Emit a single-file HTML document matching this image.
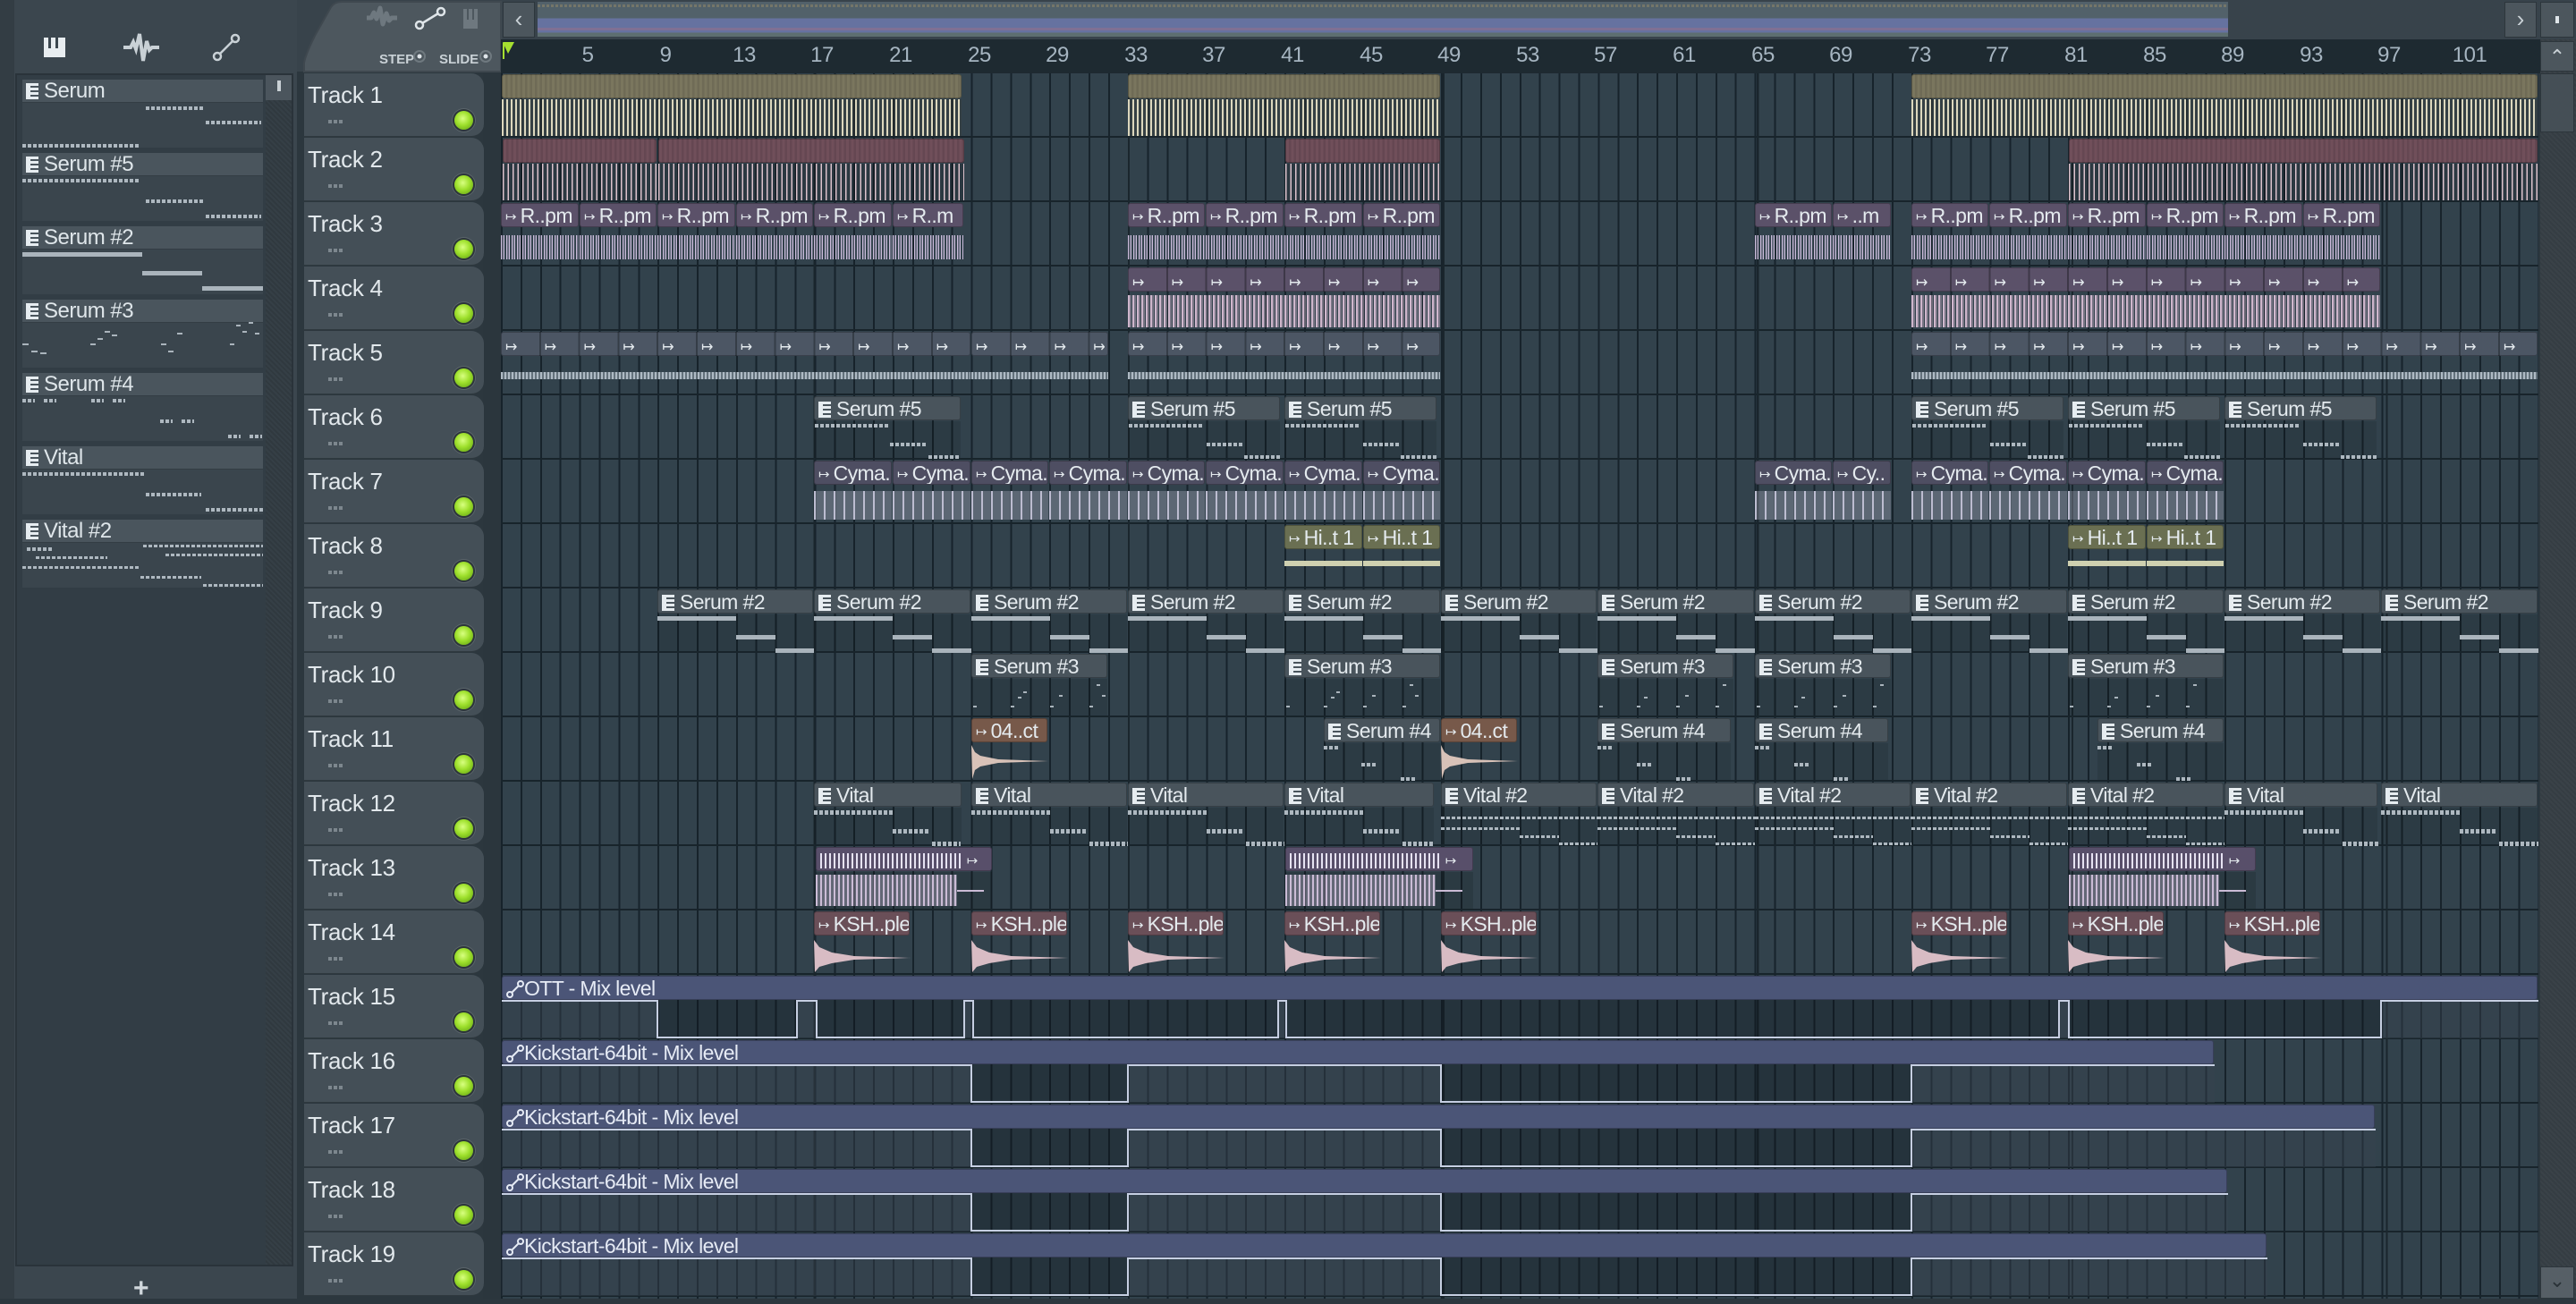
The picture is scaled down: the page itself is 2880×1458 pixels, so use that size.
<!DOCTYPE html>
<html><head><meta charset="utf-8">
<style>
*{margin:0;padding:0;box-sizing:border-box}
body{width:2880px;height:1452px;overflow:hidden;background:#2c373e;font-family:"Liberation Sans Narrow","Liberation Sans",sans-serif;color:#dfe6ea;position:relative}
.a{position:absolute}
#top{left:0;top:0;width:2880px;height:80px;background:#38434b}
#ruler{left:560px;top:44px;width:2280px;height:38px;background:#1e2a31}
#ruler span{position:absolute;top:4px;width:40px;text-align:center;font-size:24px;color:#a6b5c1;letter-spacing:-0.5px}
#grid{left:560px;top:82px;width:2278px;height:1370px;background-color:#32424c;
background-image:repeating-linear-gradient(180deg,transparent 0 70px,#18242b 70px 72px),repeating-linear-gradient(90deg,#17232b 0 2px,transparent 2px 21.9px)}
.th{position:absolute;left:340px;width:201px;height:71px;background:#444f57;border-radius:0 14px 14px 0;border-bottom:1px solid #2f393f}
.th b{position:absolute;left:4px;top:9px;font-weight:normal;font-size:26px;letter-spacing:-0.3px;color:#e2e8ec}
.th i{position:absolute;left:27px;top:52px;width:16px;height:4px;background:repeating-linear-gradient(90deg,#7d878e 0 4px,transparent 4px 6px)}
.th u{position:absolute;left:168px;top:42px;width:21px;height:21px;border-radius:50%;background:radial-gradient(circle at 45% 40%,#d8ff80 0,#9ee02c 45%,#5a9a10 100%);box-shadow:0 0 0 2px #2c353a,0 0 0 3px #5a646a}
.c{position:absolute;height:71px}
.h{position:absolute;left:0;right:1px;top:1px;height:27px;border-radius:3px;font-size:23px;letter-spacing:-0.6px;line-height:27px;padding-left:4px;white-space:nowrap;overflow:hidden;color:#e4eaee;border:1px solid rgba(0,0,0,.25)}
.h s{text-decoration:none;font-size:15px;margin-right:4px;vertical-align:2px;letter-spacing:0}
.bd{position:absolute;left:0;right:1px;top:29px;bottom:1px}
.pt .h{background:#49545c}
.pt .bd{background:rgba(0,0,0,.1)}
.ic{display:inline-block;width:14px;height:18px;vertical-align:-2px;margin-right:6px;background:repeating-linear-gradient(180deg,#e6ecf0 0 3px,#49545c 3px 5px);border-left:5px solid #e6ecf0}
.n{position:absolute;height:4px;background:repeating-linear-gradient(90deg,#aeb8c0 0 4px,transparent 4px 6px)}
.ns{position:absolute;height:5px;background:#aab4bc}
.w1{background:repeating-linear-gradient(90deg,#dcd7bd 0 2px,rgba(60,60,50,.3) 2px 5px)}
.w2{background:repeating-linear-gradient(90deg,#dcc2cc 0 1.5px,rgba(0,0,0,.15) 1.5px 5.5px)}
.wv{position:absolute;left:0;right:0}
.w3{top:8px;bottom:6px;background:repeating-linear-gradient(90deg,#cbbcdb 0 1px,rgba(200,185,220,.35) 1px 3px,#cbbcdb 3px 4px,transparent 4px 6px)}
.w4{top:3px;bottom:2px;background:repeating-linear-gradient(90deg,#cfb6cc 0 2px,rgba(207,182,204,.45) 2px 4px,transparent 4px 5px)}
.w5{top:17px;height:8px;background:repeating-linear-gradient(90deg,#aebac4 0 2px,rgba(174,186,196,.4) 2px 4px)}
.w7{top:6px;bottom:3px;background:repeating-linear-gradient(90deg,#bcbcd0 0 2px,rgba(188,188,208,.3) 2px 11px)}
.mk{display:inline-block;width:43.8px;font-style:normal;font-size:16px;letter-spacing:0}
.ha{background:#4b5577;color:#e6ebf5}
.ab{position:absolute;left:0;right:0;top:28px;height:43px}
.lp{position:absolute;left:25px;width:269px;height:26px;background:#4a555d;font-size:24px;letter-spacing:-0.5px;line-height:26px;padding-left:4px;border-bottom:1px solid #333d44}
.lb{position:absolute;left:25px;width:269px;height:50px;background:#3a454d}
</style></head><body>
<div class="a" id="top"></div>
<!-- left panel -->
<div class="a" style="left:0;top:0;width:16px;height:1452px;background:#333d44"></div>
<div class="a" style="left:16px;top:0;width:316px;height:1452px;background:#3b464e"></div>
<div class="a" style="left:17px;top:82px;width:311px;height:1334px;background:#323d45;border:2px solid #2a333a"></div>
<div class="a" style="left:297px;top:84px;width:29px;height:1330px;background:repeating-linear-gradient(45deg,#353f46 0 2px,#30393f 2px 4px)"></div>
<div class="a" style="left:297px;top:84px;width:29px;height:28px;background:#4b555d"></div>
<div class="a" style="left:310px;top:90px;width:4px;height:12px;background:#c9d0d5"></div>
<div class="a" style="left:49px;top:42px;width:24px;height:22px;background:#e8edf0"></div>
<div class="a" style="left:54px;top:42px;width:3px;height:12px;background:#3b464e"></div>
<div class="a" style="left:62px;top:42px;width:3px;height:12px;background:#3b464e"></div>
<svg class="a" style="left:136px;top:36px" width="44" height="34"><path d="M2 17h8l3-6 3 8 4-17 4 30 4-22 3 10 3-3h8" stroke="#c9d1d6" stroke-width="4" fill="none"/></svg>
<svg class="a" style="left:236px;top:36px" width="34" height="34"><circle cx="7" cy="27" r="4" stroke="#c9d1d6" stroke-width="2.5" fill="none"/><circle cx="27" cy="7" r="4" stroke="#c9d1d6" stroke-width="2.5" fill="none"/><path d="M10 24L24 10" stroke="#c9d1d6" stroke-width="2.5"/></svg>
<div class="lp" style="top:89px"><span class="ic"></span>Serum</div><div class="lb" style="top:115px"><div class="n" style="left:138px;top:4px;width:64px"></div><div class="n" style="left:205px;top:20px;width:62px"></div><div class="n" style="left:0;top:46px;width:132px"></div></div>
<div class="lp" style="top:171px"><span class="ic"></span>Serum #5</div><div class="lb" style="top:197px"><div class="n" style="left:0;top:3px;width:132px"></div><div class="n" style="left:138px;top:26px;width:64px"></div><div class="n" style="left:205px;top:43px;width:62px"></div></div>
<div class="lp" style="top:253px"><span class="ic"></span>Serum #2</div><div class="lb" style="top:279px"><div class="ns" style="left:0;top:3px;width:134px"></div><div class="ns" style="left:134px;top:24px;width:67px"></div><div class="ns" style="left:201px;top:41px;width:68px"></div></div>
<div class="lp" style="top:335px"><span class="ic"></span>Serum #3</div><div class="lb" style="top:361px"><div class="ns" style="left:0;top:23px;width:7px;height:2px"></div><div class="ns" style="left:10px;top:31px;width:7px;height:2px"></div><div class="ns" style="left:20px;top:33px;width:7px;height:2px"></div><div class="ns" style="left:76px;top:23px;width:6px;height:2px"></div><div class="ns" style="left:84px;top:17px;width:6px;height:2px"></div><div class="ns" style="left:92px;top:9px;width:6px;height:2px"></div><div class="ns" style="left:100px;top:13px;width:6px;height:2px"></div><div class="ns" style="left:155px;top:23px;width:6px;height:2px"></div><div class="ns" style="left:163px;top:31px;width:6px;height:2px"></div><div class="ns" style="left:173px;top:11px;width:6px;height:2px"></div><div class="ns" style="left:232px;top:23px;width:5px;height:2px"></div><div class="ns" style="left:239px;top:2px;width:5px;height:2px"></div><div class="ns" style="left:246px;top:9px;width:5px;height:2px"></div><div class="ns" style="left:253px;top:-1px;width:5px;height:2px"></div><div class="ns" style="left:260px;top:11px;width:5px;height:2px"></div></div>
<div class="lp" style="top:417px"><span class="ic"></span>Serum #4</div><div class="lb" style="top:443px"><div class="n" style="left:0;top:3px;width:14px"></div><div class="n" style="left:24px;top:3px;width:14px"></div><div class="n" style="left:77px;top:3px;width:14px"></div><div class="n" style="left:101px;top:3px;width:14px"></div><div class="n" style="left:154px;top:26px;width:14px"></div><div class="n" style="left:178px;top:26px;width:14px"></div><div class="n" style="left:230px;top:43px;width:14px"></div><div class="n" style="left:254px;top:43px;width:14px"></div></div>
<div class="lp" style="top:499px"><span class="ic"></span>Vital</div><div class="lb" style="top:525px"><div class="n" style="left:0;top:3px;width:136px"></div><div class="n" style="left:138px;top:26px;width:62px"></div><div class="n" style="left:205px;top:43px;width:64px"></div></div>
<div class="lp" style="top:581px"><span class="ic"></span>Vital #2</div><div class="lb" style="top:607px"><div class="n" style="left:5px;top:5px;width:30px"></div><div class="n" style="left:15px;top:15px;width:80px;height:3px"></div><div class="n" style="left:0;top:26px;width:130px;height:3px"></div><div class="n" style="left:135px;top:2px;width:134px;height:3px"></div><div class="n" style="left:160px;top:12px;width:109px;height:3px"></div><div class="n" style="left:132px;top:37px;width:68px;height:3px"></div><div class="n" style="left:202px;top:46px;width:67px;height:3px"></div></div>
<div class="a" style="left:16px;top:1417px;width:316px;height:35px;background:#3b464e"></div>
<div class="a" style="left:149px;top:1424px;font-size:30px;font-weight:bold;color:#d0d7dc">+</div>
<!-- tab -->
<svg class="a" style="left:338px;top:0" width="224" height="82"><path d="M2 80L2 70Q4 60 14 40L32 8Q36 2 44 2H222V80Z" fill="#4d575e" stroke="#3f484f" stroke-width="2"/>
<path d="M72 20h5l3-6 3 7 4-12 3 18 4-12 3 8 3-3h6" stroke="#6e787f" stroke-width="5" fill="none" stroke-linejoin="round"/>
<circle cx="131" cy="28" r="4" stroke="#dfe5e9" stroke-width="2.5" fill="none"/><circle cx="155" cy="13" r="4" stroke="#dfe5e9" stroke-width="2.5" fill="none"/><path d="M134 26L152 15" stroke="#dfe5e9" stroke-width="2.5"/>
<path d="M180 10h16v22h-16z" fill="#6e787f"/><path d="M185 10v12M191 10v12" stroke="#4d575e" stroke-width="2"/>
<text x="86" y="71" font-size="15" fill="#c9d1d6" font-family="Liberation Sans" font-weight="bold">STEP</text><circle cx="131" cy="63" r="6" fill="none" stroke="#6f797f" stroke-width="2"/><circle cx="131" cy="63" r="2.5" fill="#dfe5e9"/>
<text x="153" y="71" font-size="15" fill="#c9d1d6" font-family="Liberation Sans" font-weight="bold">SLIDE</text><circle cx="205" cy="63" r="6" fill="none" stroke="#6f797f" stroke-width="2"/><circle cx="205" cy="63" r="2.5" fill="#dfe5e9"/>
</svg>
<!-- overview -->
<div class="a" style="left:562px;top:2px;width:36px;height:40px;background:#4c565d;border:1px solid #2d363c;color:#c9d1d6;font-size:26px;text-align:center;line-height:36px">&lsaquo;</div>
<div class="a" style="left:601px;top:2px;width:1890px;height:39px;background:linear-gradient(180deg,#52616a 0 48%,#6672a0 48% 88%,#5d6e70 88%)"></div>
<div class="a" style="left:601px;top:5px;width:1890px;height:3px;background:repeating-linear-gradient(90deg,#8c8468 0 3px,transparent 3px 5px);opacity:.6"></div>
<div class="a" style="left:601px;top:31px;width:1890px;height:3px;background:#8a6f8e;opacity:.7"></div>
<div class="a" style="left:2800px;top:2px;width:36px;height:40px;background:#4c565d;border:1px solid #2d363c;color:#c9d1d6;font-size:26px;text-align:center;line-height:36px">&rsaquo;</div>
<div class="a" style="left:2840px;top:2px;width:38px;height:40px;background:#4c565d;border:1px solid #2d363c"></div>
<div class="a" style="left:2857px;top:18px;width:4px;height:8px;background:#dfe5e9"></div>
<!-- ruler -->
<div class="a" id="ruler">
<svg class="a" style="left:1px;top:2px" width="16" height="22"><path d="M1 1h13l-7 13z" fill="#a6e030"/><path d="M2 2v18" stroke="#a6e030" stroke-width="2"/></svg>
<span style="left:77px">5</span><span style="left:164px">9</span><span style="left:252px">13</span><span style="left:339px">17</span><span style="left:427px">21</span><span style="left:515px">25</span><span style="left:602px">29</span><span style="left:690px">33</span><span style="left:777px">37</span><span style="left:865px">41</span><span style="left:953px">45</span><span style="left:1040px">49</span><span style="left:1128px">53</span><span style="left:1215px">57</span><span style="left:1303px">61</span><span style="left:1391px">65</span><span style="left:1478px">69</span><span style="left:1566px">73</span><span style="left:1653px">77</span><span style="left:1741px">81</span><span style="left:1829px">85</span><span style="left:1916px">89</span><span style="left:2004px">93</span><span style="left:2091px">97</span><span style="left:2181px">101</span>
</div>
<!-- vertical scrollbar -->
<div class="a" style="left:2840px;top:44px;width:40px;height:1408px;background:repeating-linear-gradient(45deg,#3a4248 0 2px,#353d43 2px 4px)"></div>
<div class="a" style="left:2840px;top:46px;width:38px;height:34px;background:#4c565d;border:1px solid #2d363c;color:#c9d1d6;text-align:center;font-size:22px;line-height:34px">&#8963;</div>
<div class="a" style="left:2840px;top:82px;width:38px;height:66px;background:#454f56;border:1px solid #2d363c"></div>
<div class="a" style="left:2840px;top:1416px;width:38px;height:36px;background:#565f66;border:1px solid #2d363c;color:#2a3237;text-align:center;font-size:22px;line-height:30px">&#8964;</div>
<div class="a" style="left:540px;top:82px;width:20px;height:1370px;background:#2b363d"></div>
<div class="a" id="grid"></div>
<div class="a" style="left:560px;top:82px;width:2278px;height:1370px;background:repeating-linear-gradient(90deg,transparent 0 349.4px,#1a262d 349.4px 351.6px)"></div>

<!-- track headers -->
<div class="th" style="top:82px"><b>Track 1</b><i></i><u></u></div>
<div class="th" style="top:154px"><b>Track 2</b><i></i><u></u></div>
<div class="th" style="top:226px"><b>Track 3</b><i></i><u></u></div>
<div class="th" style="top:298px"><b>Track 4</b><i></i><u></u></div>
<div class="th" style="top:370px"><b>Track 5</b><i></i><u></u></div>
<div class="th" style="top:442px"><b>Track 6</b><i></i><u></u></div>
<div class="th" style="top:514px"><b>Track 7</b><i></i><u></u></div>
<div class="th" style="top:586px"><b>Track 8</b><i></i><u></u></div>
<div class="th" style="top:658px"><b>Track 9</b><i></i><u></u></div>
<div class="th" style="top:730px"><b>Track 10</b><i></i><u></u></div>
<div class="th" style="top:802px"><b>Track 11</b><i></i><u></u></div>
<div class="th" style="top:874px"><b>Track 12</b><i></i><u></u></div>
<div class="th" style="top:946px"><b>Track 13</b><i></i><u></u></div>
<div class="th" style="top:1018px"><b>Track 14</b><i></i><u></u></div>
<div class="th" style="top:1090px"><b>Track 15</b><i></i><u></u></div>
<div class="th" style="top:1162px"><b>Track 16</b><i></i><u></u></div>
<div class="th" style="top:1234px"><b>Track 17</b><i></i><u></u></div>
<div class="th" style="top:1306px"><b>Track 18</b><i></i><u></u></div>
<div class="th" style="top:1378px"><b>Track 19</b><i></i><u></u></div>

<!-- Track 1 -->
<div class="c" style="left:561px;top:82px;width:515px"><div class="h" style="background:repeating-linear-gradient(90deg,#7a765e 0 3px,#6f6b56 3px 5.5px)"></div><div class="bd w1"></div></div>
<div class="c" style="left:1261px;top:82px;width:350px"><div class="h" style="background:repeating-linear-gradient(90deg,#7a765e 0 3px,#6f6b56 3px 5.5px)"></div><div class="bd w1"></div></div>
<div class="c" style="left:2137px;top:82px;width:701px"><div class="h" style="background:repeating-linear-gradient(90deg,#7a765e 0 3px,#6f6b56 3px 5.5px)"></div><div class="bd w1"></div></div>
<!-- Track 2 -->
<div class="c" style="left:562px;top:154px;width:173px"><div class="h" style="background:repeating-linear-gradient(90deg,#704f5a 0 3px,#654752 3px 5.5px)"></div><div class="bd w2"></div></div>
<div class="c" style="left:736px;top:154px;width:343px"><div class="h" style="background:repeating-linear-gradient(90deg,#704f5a 0 3px,#654752 3px 5.5px)"></div><div class="bd w2"></div></div>
<div class="c" style="left:1437px;top:154px;width:174px"><div class="h" style="background:repeating-linear-gradient(90deg,#704f5a 0 3px,#654752 3px 5.5px)"></div><div class="bd w2"></div></div>
<div class="c" style="left:2313px;top:154px;width:525px"><div class="h" style="background:repeating-linear-gradient(90deg,#704f5a 0 3px,#654752 3px 5.5px)"></div><div class="bd w2"></div></div>
<!-- Track 3 -->
<div class="c" style="left:560px;top:226px;width:88px"><div class="h" style="background:#5b5169"><s>&#8614;</s>R..pm</div><div class="bd"><div class="wv w3"></div></div></div>
<div class="c" style="left:648px;top:226px;width:87px"><div class="h" style="background:#5b5169"><s>&#8614;</s>R..pm</div><div class="bd"><div class="wv w3"></div></div></div>
<div class="c" style="left:735px;top:226px;width:88px"><div class="h" style="background:#5b5169"><s>&#8614;</s>R..pm</div><div class="bd"><div class="wv w3"></div></div></div>
<div class="c" style="left:823px;top:226px;width:87px"><div class="h" style="background:#5b5169"><s>&#8614;</s>R..pm</div><div class="bd"><div class="wv w3"></div></div></div>
<div class="c" style="left:910px;top:226px;width:88px"><div class="h" style="background:#5b5169"><s>&#8614;</s>R..pm</div><div class="bd"><div class="wv w3"></div></div></div>
<div class="c" style="left:998px;top:226px;width:80px"><div class="h" style="background:#5b5169"><s>&#8614;</s>R..m</div><div class="bd"><div class="wv w3"></div></div></div>
<div class="c" style="left:1261px;top:226px;width:87px"><div class="h" style="background:#5b5169"><s>&#8614;</s>R..pm</div><div class="bd"><div class="wv w3"></div></div></div>
<div class="c" style="left:1348px;top:226px;width:88px"><div class="h" style="background:#5b5169"><s>&#8614;</s>R..pm</div><div class="bd"><div class="wv w3"></div></div></div>
<div class="c" style="left:1436px;top:226px;width:88px"><div class="h" style="background:#5b5169"><s>&#8614;</s>R..pm</div><div class="bd"><div class="wv w3"></div></div></div>
<div class="c" style="left:1524px;top:226px;width:87px"><div class="h" style="background:#5b5169"><s>&#8614;</s>R..pm</div><div class="bd"><div class="wv w3"></div></div></div>
<div class="c" style="left:1962px;top:226px;width:87px"><div class="h" style="background:#5b5169"><s>&#8614;</s>R..pm</div><div class="bd"><div class="wv w3"></div></div></div>
<div class="c" style="left:2049px;top:226px;width:66px"><div class="h" style="background:#5b5169"><s>&#8614;</s>..m</div><div class="bd"><div class="wv w3"></div></div></div>
<div class="c" style="left:2137px;top:226px;width:87px"><div class="h" style="background:#5b5169"><s>&#8614;</s>R..pm</div><div class="bd"><div class="wv w3"></div></div></div>
<div class="c" style="left:2224px;top:226px;width:88px"><div class="h" style="background:#5b5169"><s>&#8614;</s>R..pm</div><div class="bd"><div class="wv w3"></div></div></div>
<div class="c" style="left:2312px;top:226px;width:88px"><div class="h" style="background:#5b5169"><s>&#8614;</s>R..pm</div><div class="bd"><div class="wv w3"></div></div></div>
<div class="c" style="left:2400px;top:226px;width:87px"><div class="h" style="background:#5b5169"><s>&#8614;</s>R..pm</div><div class="bd"><div class="wv w3"></div></div></div>
<div class="c" style="left:2487px;top:226px;width:88px"><div class="h" style="background:#5b5169"><s>&#8614;</s>R..pm</div><div class="bd"><div class="wv w3"></div></div></div>
<div class="c" style="left:2575px;top:226px;width:87px"><div class="h" style="background:#5b5169"><s>&#8614;</s>R..pm</div><div class="bd"><div class="wv w3"></div></div></div>
<!-- Track 4 -->
<div class="c" style="left:1261px;top:298px;width:350px"><div class="h" style="background:repeating-linear-gradient(90deg,#5b5169 0 41.8px,#3e3848 41.8px 43.8px)"><i class="mk">&#8614;</i><i class="mk">&#8614;</i><i class="mk">&#8614;</i><i class="mk">&#8614;</i><i class="mk">&#8614;</i><i class="mk">&#8614;</i><i class="mk">&#8614;</i><i class="mk">&#8614;</i></div><div class="bd"><div class="wv w4"></div></div></div>
<div class="c" style="left:2137px;top:298px;width:525px"><div class="h" style="background:repeating-linear-gradient(90deg,#5b5169 0 41.8px,#3e3848 41.8px 43.8px)"><i class="mk">&#8614;</i><i class="mk">&#8614;</i><i class="mk">&#8614;</i><i class="mk">&#8614;</i><i class="mk">&#8614;</i><i class="mk">&#8614;</i><i class="mk">&#8614;</i><i class="mk">&#8614;</i><i class="mk">&#8614;</i><i class="mk">&#8614;</i><i class="mk">&#8614;</i><i class="mk">&#8614;</i></div><div class="bd"><div class="wv w4"></div></div></div>
<!-- Track 5 -->
<div class="c" style="left:560px;top:370px;width:526px"><div class="h" style="background:repeating-linear-gradient(90deg,#4c5664 0 41.8px,#353d47 41.8px 43.8px)"><i class="mk">&#8614;</i><i class="mk">&#8614;</i><i class="mk">&#8614;</i><i class="mk">&#8614;</i><i class="mk">&#8614;</i><i class="mk">&#8614;</i><i class="mk">&#8614;</i><i class="mk">&#8614;</i><i class="mk">&#8614;</i><i class="mk">&#8614;</i><i class="mk">&#8614;</i><i class="mk">&#8614;</i></div><div class="bd"><div class="wv w5"></div></div></div>
<div class="c" style="left:1086px;top:370px;width:154px"><div class="h" style="background:repeating-linear-gradient(90deg,#4c5664 0 41.8px,#353d47 41.8px 43.8px)"><i class="mk">&#8614;</i><i class="mk">&#8614;</i><i class="mk">&#8614;</i><i class="mk">&#8614;</i></div><div class="bd"><div class="wv w5"></div></div></div>
<div class="c" style="left:1261px;top:370px;width:350px"><div class="h" style="background:repeating-linear-gradient(90deg,#4c5664 0 41.8px,#353d47 41.8px 43.8px)"><i class="mk">&#8614;</i><i class="mk">&#8614;</i><i class="mk">&#8614;</i><i class="mk">&#8614;</i><i class="mk">&#8614;</i><i class="mk">&#8614;</i><i class="mk">&#8614;</i><i class="mk">&#8614;</i></div><div class="bd"><div class="wv w5"></div></div></div>
<div class="c" style="left:2137px;top:370px;width:701px"><div class="h" style="background:repeating-linear-gradient(90deg,#4c5664 0 41.8px,#353d47 41.8px 43.8px)"><i class="mk">&#8614;</i><i class="mk">&#8614;</i><i class="mk">&#8614;</i><i class="mk">&#8614;</i><i class="mk">&#8614;</i><i class="mk">&#8614;</i><i class="mk">&#8614;</i><i class="mk">&#8614;</i><i class="mk">&#8614;</i><i class="mk">&#8614;</i><i class="mk">&#8614;</i><i class="mk">&#8614;</i><i class="mk">&#8614;</i><i class="mk">&#8614;</i><i class="mk">&#8614;</i><i class="mk">&#8614;</i></div><div class="bd"><div class="wv w5"></div></div></div>
<!-- Track 6 Serum #5 -->
<div class="c pt" style="left:910px;top:442px;width:165px"><div class="h"><span class="ic"></span>Serum #5</div><div class="bd"><div class="n" style="left:1px;top:3px;width:82px"></div><div class="n" style="left:85px;top:24px;width:40px"></div><div class="n" style="left:128px;top:38px;width:36px"></div></div></div>
<div class="c pt" style="left:1261px;top:442px;width:171px"><div class="h"><span class="ic"></span>Serum #5</div><div class="bd"><div class="n" style="left:1px;top:3px;width:84px"></div><div class="n" style="left:88px;top:24px;width:40px"></div><div class="n" style="left:130px;top:38px;width:40px"></div></div></div>
<div class="c pt" style="left:1436px;top:442px;width:171px"><div class="h"><span class="ic"></span>Serum #5</div><div class="bd"><div class="n" style="left:1px;top:3px;width:84px"></div><div class="n" style="left:88px;top:24px;width:40px"></div><div class="n" style="left:130px;top:38px;width:40px"></div></div></div>
<div class="c pt" style="left:2137px;top:442px;width:171px"><div class="h"><span class="ic"></span>Serum #5</div><div class="bd"><div class="n" style="left:1px;top:3px;width:84px"></div><div class="n" style="left:88px;top:24px;width:40px"></div><div class="n" style="left:130px;top:38px;width:40px"></div></div></div>
<div class="c pt" style="left:2312px;top:442px;width:171px"><div class="h"><span class="ic"></span>Serum #5</div><div class="bd"><div class="n" style="left:1px;top:3px;width:84px"></div><div class="n" style="left:88px;top:24px;width:40px"></div><div class="n" style="left:130px;top:38px;width:40px"></div></div></div>
<div class="c pt" style="left:2487px;top:442px;width:171px"><div class="h"><span class="ic"></span>Serum #5</div><div class="bd"><div class="n" style="left:1px;top:3px;width:84px"></div><div class="n" style="left:88px;top:24px;width:40px"></div><div class="n" style="left:130px;top:38px;width:40px"></div></div></div>
<!-- Track 7 Cyma -->
<div class="c" style="left:910px;top:514px;width:88px"><div class="h" style="background:#4e4e62"><s>&#8614;</s>Cyma..</div><div class="bd"><div class="wv w7"></div></div></div>
<div class="c" style="left:998px;top:514px;width:88px"><div class="h" style="background:#4e4e62"><s>&#8614;</s>Cyma..</div><div class="bd"><div class="wv w7"></div></div></div>
<div class="c" style="left:1086px;top:514px;width:87px"><div class="h" style="background:#4e4e62"><s>&#8614;</s>Cyma..</div><div class="bd"><div class="wv w7"></div></div></div>
<div class="c" style="left:1173px;top:514px;width:88px"><div class="h" style="background:#4e4e62"><s>&#8614;</s>Cyma..</div><div class="bd"><div class="wv w7"></div></div></div>
<div class="c" style="left:1261px;top:514px;width:87px"><div class="h" style="background:#4e4e62"><s>&#8614;</s>Cyma..</div><div class="bd"><div class="wv w7"></div></div></div>
<div class="c" style="left:1348px;top:514px;width:88px"><div class="h" style="background:#4e4e62"><s>&#8614;</s>Cyma..</div><div class="bd"><div class="wv w7"></div></div></div>
<div class="c" style="left:1436px;top:514px;width:88px"><div class="h" style="background:#4e4e62"><s>&#8614;</s>Cyma..</div><div class="bd"><div class="wv w7"></div></div></div>
<div class="c" style="left:1524px;top:514px;width:87px"><div class="h" style="background:#4e4e62"><s>&#8614;</s>Cyma..</div><div class="bd"><div class="wv w7"></div></div></div>
<div class="c" style="left:1962px;top:514px;width:87px"><div class="h" style="background:#4e4e62"><s>&#8614;</s>Cyma..</div><div class="bd"><div class="wv w7"></div></div></div>
<div class="c" style="left:2049px;top:514px;width:66px"><div class="h" style="background:#4e4e62"><s>&#8614;</s>Cy..</div><div class="bd"><div class="wv w7"></div></div></div>
<div class="c" style="left:2137px;top:514px;width:87px"><div class="h" style="background:#4e4e62"><s>&#8614;</s>Cyma..</div><div class="bd"><div class="wv w7"></div></div></div>
<div class="c" style="left:2224px;top:514px;width:88px"><div class="h" style="background:#4e4e62"><s>&#8614;</s>Cyma..</div><div class="bd"><div class="wv w7"></div></div></div>
<div class="c" style="left:2312px;top:514px;width:88px"><div class="h" style="background:#4e4e62"><s>&#8614;</s>Cyma..</div><div class="bd"><div class="wv w7"></div></div></div>
<div class="c" style="left:2400px;top:514px;width:87px"><div class="h" style="background:#4e4e62"><s>&#8614;</s>Cyma..</div><div class="bd"><div class="wv w7"></div></div></div>
<!-- Track 8 -->
<div class="c" style="left:1436px;top:586px;width:88px"><div class="h" style="background:#6a6f52"><s>&#8614;</s>Hi..t 1</div><div class="bd"><div class="wv" style="top:12px;height:6px;background:#cfd0b0"></div></div></div>
<div class="c" style="left:1524px;top:586px;width:87px"><div class="h" style="background:#6a6f52"><s>&#8614;</s>Hi..t 1</div><div class="bd"><div class="wv" style="top:12px;height:6px;background:#cfd0b0"></div></div></div>
<div class="c" style="left:2312px;top:586px;width:88px"><div class="h" style="background:#6a6f52"><s>&#8614;</s>Hi..t 1</div><div class="bd"><div class="wv" style="top:12px;height:6px;background:#cfd0b0"></div></div></div>
<div class="c" style="left:2400px;top:586px;width:87px"><div class="h" style="background:#6a6f52"><s>&#8614;</s>Hi..t 1</div><div class="bd"><div class="wv" style="top:12px;height:6px;background:#cfd0b0"></div></div></div>
<!-- Track 9 Serum #2 -->
<div class="c pt" style="left:735px;top:658px;width:175px"><div class="h"><span class="ic"></span>Serum #2</div><div class="bd"><div class="ns" style="left:0;top:2px;width:88px"></div><div class="ns" style="left:88px;top:23px;width:44px"></div><div class="ns" style="left:132px;top:38px;width:43px"></div></div></div>
<div class="c pt" style="left:910px;top:658px;width:176px"><div class="h"><span class="ic"></span>Serum #2</div><div class="bd"><div class="ns" style="left:0;top:2px;width:88px"></div><div class="ns" style="left:88px;top:23px;width:44px"></div><div class="ns" style="left:132px;top:38px;width:44px"></div></div></div>
<div class="c pt" style="left:1086px;top:658px;width:175px"><div class="h"><span class="ic"></span>Serum #2</div><div class="bd"><div class="ns" style="left:0;top:2px;width:88px"></div><div class="ns" style="left:88px;top:23px;width:44px"></div><div class="ns" style="left:132px;top:38px;width:43px"></div></div></div>
<div class="c pt" style="left:1261px;top:658px;width:175px"><div class="h"><span class="ic"></span>Serum #2</div><div class="bd"><div class="ns" style="left:0;top:2px;width:88px"></div><div class="ns" style="left:88px;top:23px;width:44px"></div><div class="ns" style="left:132px;top:38px;width:43px"></div></div></div>
<div class="c pt" style="left:1436px;top:658px;width:175px"><div class="h"><span class="ic"></span>Serum #2</div><div class="bd"><div class="ns" style="left:0;top:2px;width:88px"></div><div class="ns" style="left:88px;top:23px;width:44px"></div><div class="ns" style="left:132px;top:38px;width:43px"></div></div></div>
<div class="c pt" style="left:1611px;top:658px;width:175px"><div class="h"><span class="ic"></span>Serum #2</div><div class="bd"><div class="ns" style="left:0;top:2px;width:88px"></div><div class="ns" style="left:88px;top:23px;width:44px"></div><div class="ns" style="left:132px;top:38px;width:43px"></div></div></div>
<div class="c pt" style="left:1786px;top:658px;width:176px"><div class="h"><span class="ic"></span>Serum #2</div><div class="bd"><div class="ns" style="left:0;top:2px;width:88px"></div><div class="ns" style="left:88px;top:23px;width:44px"></div><div class="ns" style="left:132px;top:38px;width:44px"></div></div></div>
<div class="c pt" style="left:1962px;top:658px;width:175px"><div class="h"><span class="ic"></span>Serum #2</div><div class="bd"><div class="ns" style="left:0;top:2px;width:88px"></div><div class="ns" style="left:88px;top:23px;width:44px"></div><div class="ns" style="left:132px;top:38px;width:43px"></div></div></div>
<div class="c pt" style="left:2137px;top:658px;width:175px"><div class="h"><span class="ic"></span>Serum #2</div><div class="bd"><div class="ns" style="left:0;top:2px;width:88px"></div><div class="ns" style="left:88px;top:23px;width:44px"></div><div class="ns" style="left:132px;top:38px;width:43px"></div></div></div>
<div class="c pt" style="left:2312px;top:658px;width:175px"><div class="h"><span class="ic"></span>Serum #2</div><div class="bd"><div class="ns" style="left:0;top:2px;width:88px"></div><div class="ns" style="left:88px;top:23px;width:44px"></div><div class="ns" style="left:132px;top:38px;width:43px"></div></div></div>
<div class="c pt" style="left:2487px;top:658px;width:175px"><div class="h"><span class="ic"></span>Serum #2</div><div class="bd"><div class="ns" style="left:0;top:2px;width:88px"></div><div class="ns" style="left:88px;top:23px;width:44px"></div><div class="ns" style="left:132px;top:38px;width:43px"></div></div></div>
<div class="c pt" style="left:2662px;top:658px;width:176px"><div class="h"><span class="ic"></span>Serum #2</div><div class="bd"><div class="ns" style="left:0;top:2px;width:88px"></div><div class="ns" style="left:88px;top:23px;width:44px"></div><div class="ns" style="left:132px;top:38px;width:44px"></div></div></div>
<!-- Track 10 Serum #3 -->
<div class="c pt" style="left:1086px;top:730px;width:153px"><div class="h"><span class="ic"></span>Serum #3</div><div class="bd"><div class="ns" style="left:2px;top:30px;width:4px;height:2px"></div><div class="ns" style="left:44px;top:30px;width:4px;height:2px"></div><div class="ns" style="left:52px;top:20px;width:4px;height:2px"></div><div class="ns" style="left:58px;top:14px;width:4px;height:2px"></div><div class="ns" style="left:88px;top:30px;width:4px;height:2px"></div><div class="ns" style="left:98px;top:18px;width:4px;height:2px"></div><div class="ns" style="left:132px;top:30px;width:4px;height:2px"></div><div class="ns" style="left:140px;top:6px;width:4px;height:2px"></div><div class="ns" style="left:146px;top:18px;width:4px;height:2px"></div></div></div>
<div class="c pt" style="left:1436px;top:730px;width:175px"><div class="h"><span class="ic"></span>Serum #3</div><div class="bd"><div class="ns" style="left:2px;top:30px;width:4px;height:2px"></div><div class="ns" style="left:44px;top:30px;width:4px;height:2px"></div><div class="ns" style="left:52px;top:20px;width:4px;height:2px"></div><div class="ns" style="left:58px;top:14px;width:4px;height:2px"></div><div class="ns" style="left:88px;top:30px;width:4px;height:2px"></div><div class="ns" style="left:98px;top:18px;width:4px;height:2px"></div><div class="ns" style="left:132px;top:30px;width:4px;height:2px"></div><div class="ns" style="left:140px;top:6px;width:4px;height:2px"></div><div class="ns" style="left:146px;top:18px;width:4px;height:2px"></div></div></div>
<div class="c pt" style="left:1786px;top:730px;width:153px"><div class="h"><span class="ic"></span>Serum #3</div><div class="bd"><div class="ns" style="left:2px;top:30px;width:4px;height:2px"></div><div class="ns" style="left:44px;top:30px;width:4px;height:2px"></div><div class="ns" style="left:52px;top:20px;width:4px;height:2px"></div><div class="ns" style="left:88px;top:30px;width:4px;height:2px"></div><div class="ns" style="left:98px;top:18px;width:4px;height:2px"></div><div class="ns" style="left:132px;top:30px;width:4px;height:2px"></div><div class="ns" style="left:140px;top:6px;width:4px;height:2px"></div></div></div>
<div class="c pt" style="left:1962px;top:730px;width:153px"><div class="h"><span class="ic"></span>Serum #3</div><div class="bd"><div class="ns" style="left:2px;top:30px;width:4px;height:2px"></div><div class="ns" style="left:44px;top:30px;width:4px;height:2px"></div><div class="ns" style="left:52px;top:20px;width:4px;height:2px"></div><div class="ns" style="left:88px;top:30px;width:4px;height:2px"></div><div class="ns" style="left:98px;top:18px;width:4px;height:2px"></div><div class="ns" style="left:132px;top:30px;width:4px;height:2px"></div><div class="ns" style="left:140px;top:6px;width:4px;height:2px"></div></div></div>
<div class="c pt" style="left:2312px;top:730px;width:175px"><div class="h"><span class="ic"></span>Serum #3</div><div class="bd"><div class="ns" style="left:2px;top:30px;width:4px;height:2px"></div><div class="ns" style="left:44px;top:30px;width:4px;height:2px"></div><div class="ns" style="left:52px;top:20px;width:4px;height:2px"></div><div class="ns" style="left:88px;top:30px;width:4px;height:2px"></div><div class="ns" style="left:98px;top:18px;width:4px;height:2px"></div><div class="ns" style="left:132px;top:30px;width:4px;height:2px"></div><div class="ns" style="left:140px;top:6px;width:4px;height:2px"></div></div></div>
<!-- Track 11 -->
<div class="c" style="left:1086px;top:802px;width:86px"><div class="h" style="background:#77594a"><s>&#8614;</s>04..ct</div><div class="bd"><svg width="86" height="42" style="position:absolute;left:0;top:0"><path d="M0 2L1 40L4 30L10 26L30 22L86 20L30 18L10 14L4 10Z" fill="#d8c2b8"/></svg></div></div>
<div class="c" style="left:1611px;top:802px;width:86px"><div class="h" style="background:#77594a"><s>&#8614;</s>04..ct</div><div class="bd"><svg width="86" height="42" style="position:absolute;left:0;top:0"><path d="M0 2L1 40L4 30L10 26L30 22L86 20L30 18L10 14L4 10Z" fill="#d8c2b8"/></svg></div></div>
<div class="c pt" style="left:1480px;top:802px;width:131px"><div class="h"><span class="ic"></span>Serum #4</div><div class="bd"><div class="n" style="left:0;top:3px;width:16px"></div><div class="n" style="left:42px;top:22px;width:16px"></div><div class="n" style="left:86px;top:38px;width:16px"></div></div></div>
<div class="c pt" style="left:1786px;top:802px;width:150px"><div class="h"><span class="ic"></span>Serum #4</div><div class="bd"><div class="n" style="left:0;top:3px;width:16px"></div><div class="n" style="left:44px;top:22px;width:16px"></div><div class="n" style="left:88px;top:38px;width:16px"></div></div></div>
<div class="c pt" style="left:1962px;top:802px;width:150px"><div class="h"><span class="ic"></span>Serum #4</div><div class="bd"><div class="n" style="left:0;top:3px;width:16px"></div><div class="n" style="left:44px;top:22px;width:16px"></div><div class="n" style="left:88px;top:38px;width:16px"></div></div></div>
<div class="c pt" style="left:2345px;top:802px;width:142px"><div class="h"><span class="ic"></span>Serum #4</div><div class="bd"><div class="n" style="left:0;top:3px;width:16px"></div><div class="n" style="left:44px;top:22px;width:16px"></div><div class="n" style="left:88px;top:38px;width:16px"></div></div></div>
<!-- Track 12 -->
<div class="c pt" style="left:910px;top:874px;width:166px"><div class="h"><span class="ic"></span>Vital</div><div class="bd"><div class="n" style="left:0;top:3px;width:88px;height:5px"></div><div class="n" style="left:88px;top:24px;width:42px;height:5px"></div><div class="n" style="left:132px;top:38px;width:32px;height:5px"></div></div></div>
<div class="c pt" style="left:1086px;top:874px;width:175px"><div class="h"><span class="ic"></span>Vital</div><div class="bd"><div class="n" style="left:0;top:3px;width:88px;height:5px"></div><div class="n" style="left:88px;top:24px;width:42px;height:5px"></div><div class="n" style="left:132px;top:38px;width:43px;height:5px"></div></div></div>
<div class="c pt" style="left:1261px;top:874px;width:175px"><div class="h"><span class="ic"></span>Vital</div><div class="bd"><div class="n" style="left:0;top:3px;width:88px;height:5px"></div><div class="n" style="left:88px;top:24px;width:42px;height:5px"></div><div class="n" style="left:132px;top:38px;width:43px;height:5px"></div></div></div>
<div class="c pt" style="left:1436px;top:874px;width:168px"><div class="h"><span class="ic"></span>Vital</div><div class="bd"><div class="n" style="left:0;top:3px;width:88px;height:5px"></div><div class="n" style="left:88px;top:24px;width:42px;height:5px"></div><div class="n" style="left:132px;top:38px;width:36px;height:5px"></div></div></div>
<div class="c pt" style="left:1611px;top:874px;width:175px"><div class="h"><span class="ic"></span>Vital #2</div><div class="bd"><div class="n" style="left:0;top:10px;width:175px;height:3px"></div><div class="n" style="left:0;top:22px;width:88px;height:3px"></div><div class="n" style="left:88px;top:31px;width:44px;height:3px"></div><div class="n" style="left:132px;top:39px;width:43px;height:3px"></div></div></div>
<div class="c pt" style="left:1786px;top:874px;width:176px"><div class="h"><span class="ic"></span>Vital #2</div><div class="bd"><div class="n" style="left:0;top:10px;width:176px;height:3px"></div><div class="n" style="left:0;top:22px;width:88px;height:3px"></div><div class="n" style="left:88px;top:31px;width:44px;height:3px"></div><div class="n" style="left:132px;top:39px;width:44px;height:3px"></div></div></div>
<div class="c pt" style="left:1962px;top:874px;width:175px"><div class="h"><span class="ic"></span>Vital #2</div><div class="bd"><div class="n" style="left:0;top:10px;width:175px;height:3px"></div><div class="n" style="left:0;top:22px;width:88px;height:3px"></div><div class="n" style="left:88px;top:31px;width:44px;height:3px"></div><div class="n" style="left:132px;top:39px;width:43px;height:3px"></div></div></div>
<div class="c pt" style="left:2137px;top:874px;width:175px"><div class="h"><span class="ic"></span>Vital #2</div><div class="bd"><div class="n" style="left:0;top:10px;width:175px;height:3px"></div><div class="n" style="left:0;top:22px;width:88px;height:3px"></div><div class="n" style="left:88px;top:31px;width:44px;height:3px"></div><div class="n" style="left:132px;top:39px;width:43px;height:3px"></div></div></div>
<div class="c pt" style="left:2312px;top:874px;width:175px"><div class="h"><span class="ic"></span>Vital #2</div><div class="bd"><div class="n" style="left:0;top:10px;width:175px;height:3px"></div><div class="n" style="left:0;top:22px;width:88px;height:3px"></div><div class="n" style="left:88px;top:31px;width:44px;height:3px"></div><div class="n" style="left:132px;top:39px;width:43px;height:3px"></div></div></div>
<div class="c pt" style="left:2487px;top:874px;width:172px"><div class="h"><span class="ic"></span>Vital</div><div class="bd"><div class="n" style="left:0;top:3px;width:88px;height:5px"></div><div class="n" style="left:88px;top:24px;width:42px;height:5px"></div><div class="n" style="left:132px;top:38px;width:40px;height:5px"></div></div></div>
<div class="c pt" style="left:2662px;top:874px;width:176px"><div class="h"><span class="ic"></span>Vital</div><div class="bd"><div class="n" style="left:0;top:3px;width:88px;height:5px"></div><div class="n" style="left:88px;top:24px;width:42px;height:5px"></div><div class="n" style="left:132px;top:38px;width:44px;height:5px"></div></div></div>
<!-- Track 13 -->
<div class="c" style="left:912px;top:946px;width:198px"><div class="h" style="background:#584f6a"><span style="display:inline-block;width:158px;height:17px;vertical-align:-2px;background:repeating-linear-gradient(90deg,#e6e2f2 0 2px,transparent 2px 5px)"></span> <s>&#8614;</s></div><div class="bd" style="background:rgba(0,0,0,.12)"><div class="wv" style="left:0;width:158px;top:3px;bottom:3px;background:repeating-linear-gradient(90deg,#cbbcd6 0 2px,rgba(203,188,214,.35) 2px 5px)"></div><div class="wv" style="left:158px;width:30px;top:20px;height:2px;background:#cbbcd6"></div></div></div>
<div class="c" style="left:1437px;top:946px;width:211px"><div class="h" style="background:#584f6a"><span style="display:inline-block;width:168px;height:17px;vertical-align:-2px;background:repeating-linear-gradient(90deg,#e6e2f2 0 2px,transparent 2px 5px)"></span> <s>&#8614;</s></div><div class="bd" style="background:rgba(0,0,0,.12)"><div class="wv" style="left:0;width:168px;top:3px;bottom:3px;background:repeating-linear-gradient(90deg,#cbbcd6 0 2px,rgba(203,188,214,.35) 2px 5px)"></div><div class="wv" style="left:168px;width:30px;top:20px;height:2px;background:#cbbcd6"></div></div></div>
<div class="c" style="left:2313px;top:946px;width:210px"><div class="h" style="background:#584f6a"><span style="display:inline-block;width:168px;height:17px;vertical-align:-2px;background:repeating-linear-gradient(90deg,#e6e2f2 0 2px,transparent 2px 5px)"></span> <s>&#8614;</s></div><div class="bd" style="background:rgba(0,0,0,.12)"><div class="wv" style="left:0;width:168px;top:3px;bottom:3px;background:repeating-linear-gradient(90deg,#cbbcd6 0 2px,rgba(203,188,214,.35) 2px 5px)"></div><div class="wv" style="left:168px;width:30px;top:20px;height:2px;background:#cbbcd6"></div></div></div>
<!-- Track 14 KSH -->
<div class="c" style="left:910px;top:1018px;width:108px"><div class="h" style="background:#6a4f58"><s>&#8614;</s>KSH..ple</div><div class="bd"><svg width="108" height="42" style="position:absolute;left:0;top:0"><path d="M0 4L1 40L6 34L20 30L45 26L108 24L45 22L20 18L6 12Z" fill="#d8bcc4"/></svg></div></div>
<div class="c" style="left:1086px;top:1018px;width:108px"><div class="h" style="background:#6a4f58"><s>&#8614;</s>KSH..ple</div><div class="bd"><svg width="108" height="42" style="position:absolute;left:0;top:0"><path d="M0 4L1 40L6 34L20 30L45 26L108 24L45 22L20 18L6 12Z" fill="#d8bcc4"/></svg></div></div>
<div class="c" style="left:1261px;top:1018px;width:108px"><div class="h" style="background:#6a4f58"><s>&#8614;</s>KSH..ple</div><div class="bd"><svg width="108" height="42" style="position:absolute;left:0;top:0"><path d="M0 4L1 40L6 34L20 30L45 26L108 24L45 22L20 18L6 12Z" fill="#d8bcc4"/></svg></div></div>
<div class="c" style="left:1436px;top:1018px;width:108px"><div class="h" style="background:#6a4f58"><s>&#8614;</s>KSH..ple</div><div class="bd"><svg width="108" height="42" style="position:absolute;left:0;top:0"><path d="M0 4L1 40L6 34L20 30L45 26L108 24L45 22L20 18L6 12Z" fill="#d8bcc4"/></svg></div></div>
<div class="c" style="left:1611px;top:1018px;width:108px"><div class="h" style="background:#6a4f58"><s>&#8614;</s>KSH..ple</div><div class="bd"><svg width="108" height="42" style="position:absolute;left:0;top:0"><path d="M0 4L1 40L6 34L20 30L45 26L108 24L45 22L20 18L6 12Z" fill="#d8bcc4"/></svg></div></div>
<div class="c" style="left:2137px;top:1018px;width:108px"><div class="h" style="background:#6a4f58"><s>&#8614;</s>KSH..ple</div><div class="bd"><svg width="108" height="42" style="position:absolute;left:0;top:0"><path d="M0 4L1 40L6 34L20 30L45 26L108 24L45 22L20 18L6 12Z" fill="#d8bcc4"/></svg></div></div>
<div class="c" style="left:2312px;top:1018px;width:108px"><div class="h" style="background:#6a4f58"><s>&#8614;</s>KSH..ple</div><div class="bd"><svg width="108" height="42" style="position:absolute;left:0;top:0"><path d="M0 4L1 40L6 34L20 30L45 26L108 24L45 22L20 18L6 12Z" fill="#d8bcc4"/></svg></div></div>
<div class="c" style="left:2487px;top:1018px;width:108px"><div class="h" style="background:#6a4f58"><s>&#8614;</s>KSH..ple</div><div class="bd"><svg width="108" height="42" style="position:absolute;left:0;top:0"><path d="M0 4L1 40L6 34L20 30L45 26L108 24L45 22L20 18L6 12Z" fill="#d8bcc4"/></svg></div></div>

<!-- Automation Track 15 -->
<div class="c" style="left:561px;top:1090px;width:2277px"><div class="h ha"><svg width="20" height="20" style="vertical-align:-3px"><circle cx="4" cy="16" r="3" stroke="#e6ebf5" stroke-width="2" fill="none"/><circle cx="16" cy="4" r="3" stroke="#e6ebf5" stroke-width="2" fill="none"/><path d="M6 14L14 6" stroke="#e6ebf5" stroke-width="2"/></svg>OTT - Mix level</div>
<svg class="ab" width="2277" height="43"><rect width="2277" height="43" fill="rgba(10,18,24,.3)"/><path d="M0 43V1H174V42H330V1H352V42H517V1H527V42H868V1H877V42H1741V1H1752V42H2101V1H2277V43Z" fill="rgba(120,140,155,.18)"/><path d="M0 1H174V42H330V1H352V42H517V1H527V42H868V1H877V42H1741V1H1752V42H2101V1H2277" stroke="#c6cfe2" stroke-width="2" fill="none"/></svg></div>
<!-- 16-19 -->
<div class="c" style="left:561px;top:1162px;width:1915px"><div class="h ha"><svg width="20" height="20" style="vertical-align:-3px"><circle cx="4" cy="16" r="3" stroke="#e6ebf5" stroke-width="2" fill="none"/><circle cx="16" cy="4" r="3" stroke="#e6ebf5" stroke-width="2" fill="none"/><path d="M6 14L14 6" stroke="#e6ebf5" stroke-width="2"/></svg>Kickstart-64bit - Mix level</div>
<svg class="ab" width="1915" height="43"><rect width="1915" height="43" fill="rgba(10,18,24,.3)"/><path d="M0 43V1H525V42H700V1H1050V42H1576V1H1915V43Z" fill="rgba(120,140,155,.18)"/><path d="M0 1H525V42H700V1H1050V42H1576V1H1915" stroke="#c6cfe2" stroke-width="2" fill="none"/></svg></div>
<div class="c" style="left:561px;top:1234px;width:2095px"><div class="h ha"><svg width="20" height="20" style="vertical-align:-3px"><circle cx="4" cy="16" r="3" stroke="#e6ebf5" stroke-width="2" fill="none"/><circle cx="16" cy="4" r="3" stroke="#e6ebf5" stroke-width="2" fill="none"/><path d="M6 14L14 6" stroke="#e6ebf5" stroke-width="2"/></svg>Kickstart-64bit - Mix level</div>
<svg class="ab" width="2095" height="43"><rect width="2095" height="43" fill="rgba(10,18,24,.3)"/><path d="M0 43V1H525V42H700V1H1050V42H1576V1H2095V43Z" fill="rgba(120,140,155,.18)"/><path d="M0 1H525V42H700V1H1050V42H1576V1H2095" stroke="#c6cfe2" stroke-width="2" fill="none"/></svg></div>
<div class="c" style="left:561px;top:1306px;width:1930px"><div class="h ha"><svg width="20" height="20" style="vertical-align:-3px"><circle cx="4" cy="16" r="3" stroke="#e6ebf5" stroke-width="2" fill="none"/><circle cx="16" cy="4" r="3" stroke="#e6ebf5" stroke-width="2" fill="none"/><path d="M6 14L14 6" stroke="#e6ebf5" stroke-width="2"/></svg>Kickstart-64bit - Mix level</div>
<svg class="ab" width="1930" height="43"><rect width="1930" height="43" fill="rgba(10,18,24,.3)"/><path d="M0 43V1H525V42H700V1H1050V42H1576V1H1930V43Z" fill="rgba(120,140,155,.18)"/><path d="M0 1H525V42H700V1H1050V42H1576V1H1930" stroke="#c6cfe2" stroke-width="2" fill="none"/></svg></div>
<div class="c" style="left:561px;top:1378px;width:1974px"><div class="h ha"><svg width="20" height="20" style="vertical-align:-3px"><circle cx="4" cy="16" r="3" stroke="#e6ebf5" stroke-width="2" fill="none"/><circle cx="16" cy="4" r="3" stroke="#e6ebf5" stroke-width="2" fill="none"/><path d="M6 14L14 6" stroke="#e6ebf5" stroke-width="2"/></svg>Kickstart-64bit - Mix level</div>
<svg class="ab" width="1974" height="43"><rect width="1974" height="43" fill="rgba(10,18,24,.3)"/><path d="M0 43V1H525V42H700V1H1050V42H1576V1H1974V43Z" fill="rgba(120,140,155,.18)"/><path d="M0 1H525V42H700V1H1050V42H1576V1H1974" stroke="#c6cfe2" stroke-width="2" fill="none"/></svg></div>
</body></html>
